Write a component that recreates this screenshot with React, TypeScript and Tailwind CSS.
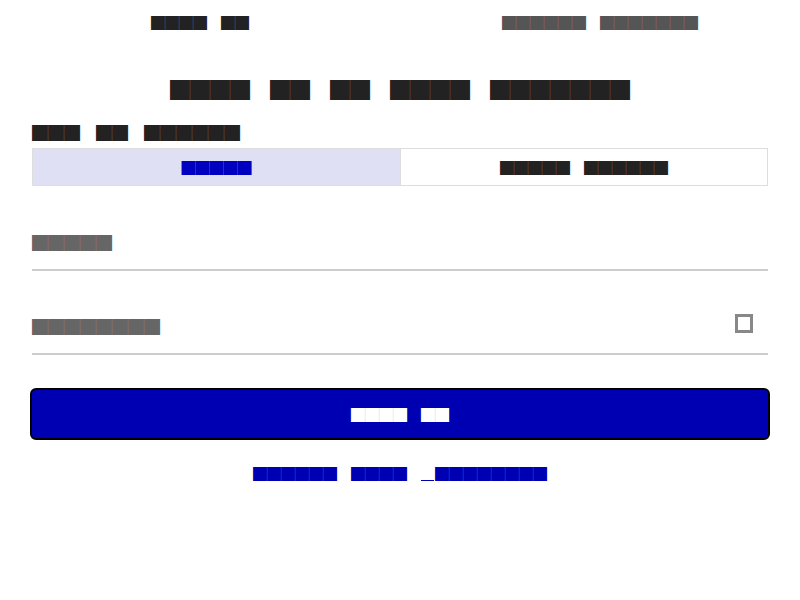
const blockFont = {
  fontFamily: '"Noto Sans CJK JP", "DejaVu Sans", sans-serif',
};

// spaces become ideographic spaces so every cell is 1em wide
function Blocks({ text, className = "" }: { text: string; className?: string }) {
  return (
    <span className={`whitespace-pre leading-none ${className}`} style={blockFont}>
      {text.replace(/ /g, "\u3000")}
    </span>
  );
}

export default function App() {
  return (
    <div className="w-[800px] h-[600px] bg-white px-8">
      <header className="grid grid-cols-2 pt-[15px] text-[14px] -mx-8">
        <div className="flex justify-center text-[#222]">
          <Blocks text="████ ██" />
        </div>
        <div className="flex justify-center text-[#555]">
          <Blocks text="██████ ███████" />
        </div>
      </header>

      <h1 className="mt-[51px] flex justify-center text-[20px] font-normal text-[#222]">
        <Blocks text="████ ██ ██ ████ ███████" />
      </h1>

      <div className="mt-[24px] flex text-[16px] text-[#222]">
        <Blocks text="███ ██ ██████" />
      </div>

      <div className="mt-[8px] grid grid-cols-2 border border-[#ddd] text-[14px]">
        <button className="h-[36px] bg-[#e0e0f5] flex items-center justify-center text-[#0000c0]">
          <Blocks text="█████" />
        </button>
        <button className="h-[36px] bg-white border-l border-[#ddd] flex items-center justify-center text-[#222]">
          <Blocks text="█████ ██████" />
        </button>
      </div>

      <div className="mt-[48px] pb-[19px] border-b-2 border-[#ccc] flex text-[16px] text-[#666]">
        <Blocks text="█████" />
      </div>

      <div className="mt-[47px] pb-[19px] border-b-2 border-[#ccc] flex items-start justify-between text-[16px] text-[#666]">
        <Blocks text="████████" />
        <div className="w-[18px] h-[19px] -mt-[4px] mr-[15px] border-[3px] border-[#888] bg-white" />
      </div>

      <button className="mt-[33px] -mx-[2px] w-[calc(100%+4px)] h-[52px] rounded-[6px] border-2 border-black bg-[#0000b3] flex items-center justify-center text-[14px] text-white">
        <Blocks text="████ ██" />
      </button>

      <p className="mt-[26px] flex items-start justify-center leading-none text-[14px] text-[#0000b3]">
        <Blocks text="██████ ████ " />
        <a href="#" className="underline leading-none">
          <Blocks text=" ████████" />
        </a>
      </p>
    </div>
  );
}
